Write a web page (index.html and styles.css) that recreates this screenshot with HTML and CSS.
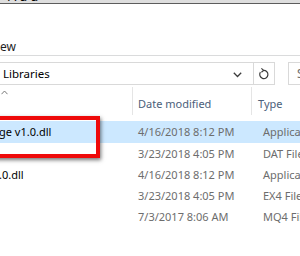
FILE: index.html
```html
<!DOCTYPE html>
<html lang="en">
<head>
    <meta charset="UTF-8">
    <title>Libraries</title>
    <link rel="stylesheet" href="styles.css">
</head>
<body>
    <div class="window">
        <div class="titlebar"><span class="title-text">Add</span></div>

        <div class="ribbon">
            <span class="tab">ew</span>
        </div>

        <div class="navbar">
            <div class="address">
                <span class="path">Libraries</span>
                <span class="chevron">
                    <svg width="9" height="6" viewBox="0 0 9 6"><path d="M0.8 0.8 L4.5 4.5 L8.2 0.8" fill="none" stroke="#3c3c3c" stroke-width="1.3"/></svg>
                </span>
                <span class="refresh">
                    <svg width="12" height="13" viewBox="0 0 12 13"><path d="M5.2 3.4 A4.1 4.1 0 1 1 2.4 5.2" fill="none" stroke="#3c3c3c" stroke-width="1.2"/><path d="M3.4 1.4 L5.6 3.4 L3.4 5.2" fill="none" stroke="#3c3c3c" stroke-width="1.2"/></svg>
                </span>
            </div>
            <div class="search"><span>Search Libraries</span></div>
        </div>

        <div class="header">
            <div class="col col-name">
                <svg class="sort" width="7" height="5" viewBox="0 0 7 5"><path d="M0.5 4.2 L3.5 1 L6.5 4.2" fill="none" stroke="#7a7a7a" stroke-width="1"/></svg>
            </div>
            <div class="col col-date">Date modified</div>
            <div class="col col-type">Type</div>
        </div>

        <div class="rows">
            <div class="row selected">
                <div class="cell col-name name">ge v1.0.dll</div>
                <div class="cell col-date">4/16/2018 8:12 PM</div>
                <div class="cell col-type">Application extension</div>
            </div>
            <div class="row">
                <div class="cell col-name name"></div>
                <div class="cell col-date">3/23/2018 4:05 PM</div>
                <div class="cell col-type">DAT File</div>
            </div>
            <div class="row">
                <div class="cell col-name name">.0.dll</div>
                <div class="cell col-date">4/16/2018 8:12 PM</div>
                <div class="cell col-type">Application extension</div>
            </div>
            <div class="row">
                <div class="cell col-name name"></div>
                <div class="cell col-date">3/23/2018 4:05 PM</div>
                <div class="cell col-type">EX4 File</div>
            </div>
            <div class="row">
                <div class="cell col-name name"></div>
                <div class="cell col-date">7/3/2017 8:06 AM</div>
                <div class="cell col-type">MQ4 File</div>
            </div>
        </div>

        <!-- red marker drawn over the selected file -->
        <div class="highlight"></div>
    </div>
</body>
</html>
```

FILE: styles.css
```css
body {
    margin: 0;
    padding: 0;
    background-color: #ffffff;
    font-family: "Noto Sans", "Open Sans", sans-serif;
    font-size: 11px;
    color: #000000;
}

.window {
    position: relative;
    width: 300px;
    height: 256px;
    overflow: hidden;
    background-color: #ffffff;
}

.titlebar {
    height: 3px;
    padding-left: 8px;
    overflow: hidden;
    background-color: #dedede;
    border-bottom: 1px solid #5c5c5c;
}

.title-text {
    display: block;
    font-size: 13px;
    line-height: 13px;
    margin-top: -10px;
    letter-spacing: 3px;
}

.ribbon {
    height: 52px;
    box-sizing: border-box;
    padding-top: 35px;
    border-bottom: 1px solid #dadbdc;
}

.tab {
    display: block;
    font-size: 12px;
    line-height: 16px;
    color: #1e1e1e;
}

.navbar {
    display: flex;
    align-items: stretch;
    padding-top: 6px;
    height: 23px;
}

.address {
    display: flex;
    align-items: center;
    width: 276px;
    margin-left: -1px;
    box-sizing: border-box;
    border: 1px solid #d9d9d9;
}

.path {
    flex: 1;
    padding-left: 3px;
    font-size: 11.5px;
    line-height: 16px;
    padding-top: 1px;
}

.chevron {
    display: flex;
    width: 13px;
    margin-right: 7px;
    padding-top: 2px;
}

.refresh {
    display: flex;
    align-items: center;
    justify-content: center;
    width: 20px;
    height: 100%;
    border-left: 1px solid #d9d9d9;
}

.search {
    flex: 1;
    margin-left: 13px;
    display: flex;
    align-items: center;
    padding-left: 8px;
    border: 1px solid #d9d9d9;
    border-right: none;
    white-space: nowrap;
    overflow: hidden;
    font-size: 12px;
    color: #6d6d6d;
}

.header {
    display: flex;
    height: 28px;
    margin-top: 2px;
    color: #4c607a;
}

.col {
    position: relative;
    box-sizing: border-box;
    line-height: 16px;
    padding-top: 9px;
    white-space: nowrap;
    overflow: hidden;
}

.header .col-name,
.header .col-date {
    border-right: 1px solid #e5e5e5;
}

.col-name {
    width: 133px;
    flex-shrink: 0;
}

.col-date {
    width: 119px;
    flex-shrink: 0;
    padding-left: 5px;
}

.col-type {
    flex: 1;
    padding-left: 6px;
}

.sort {
    position: absolute;
    left: 1px;
    top: 3px;
}

.rows {
    padding-top: 6px;
}

.row {
    display: flex;
    height: 21px;
    box-sizing: border-box;
}

.row.selected {
    background-color: #cce8ff;
    height: 22px;
}

.cell {
    padding-top: 3px;
    line-height: 16px;
    white-space: nowrap;
    overflow: hidden;
    color: #6d6d6d;
}

.cell.name {
    color: #000000;
    text-indent: -1px;
}

.highlight {
    position: absolute;
    left: -10px;
    top: 116px;
    width: 110px;
    height: 42px;
    box-sizing: border-box;
    border: 4px solid #ee0a0a;
    box-shadow: 1px 2px 4px rgba(0, 0, 0, 0.55);
}
```
